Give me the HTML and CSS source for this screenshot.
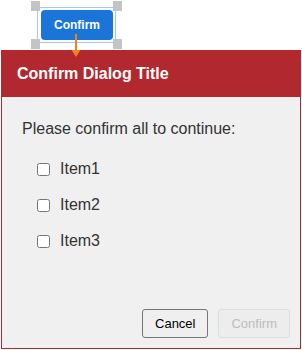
FILE: index.html
```html
<!DOCTYPE html>
<html>
<head>
  <meta charset="UTF-8">
  <title>Confirm Dialog</title>
  <link rel="stylesheet" href="styles.css">
</head>
<body>

  <!-- Trigger button, selected in the editor -->
  <div class="stage">
    <div class="selected">
      <button class="trigger">Confirm</button>
      <span class="handle tl"></span>
      <span class="handle tr"></span>
      <span class="handle bl"></span>
      <span class="handle br"></span>
      <svg class="link" width="10" height="24" viewBox="0 0 10 24">
        <line x1="5" y1="0" x2="5" y2="17" stroke="#f0801e" stroke-width="2"/>
        <polygon points="0.5,16 9.5,16 5,23" fill="#f0801e"/>
      </svg>
    </div>
  </div>

  <!-- Dialog -->
  <div class="dialog">
    <div class="dialog-title">Confirm Dialog Title</div>
    <div class="dialog-body">
      <p class="prompt">Please confirm all to continue:</p>
      <label class="item"><input type="checkbox"> Item1</label>
      <label class="item"><input type="checkbox"> Item2</label>
      <label class="item"><input type="checkbox"> Item3</label>
    </div>
    <div class="dialog-footer">
      <button class="btn">Cancel</button>
      <button class="btn" disabled>Confirm</button>
    </div>
  </div>

</body>
</html>
```

FILE: styles.css
```css
body {
  margin: 0;
  font-family: "Liberation Sans", Arial, sans-serif;
  background: #fff;
}
.stage {
  height: 50px;
  padding: 7px 0 0 37px;
  box-sizing: border-box;
}
.selected {
  position: relative;
  width: 79px;
  height: 36px;
  box-sizing: border-box;
  border: 1px solid #a9c4f7;
  padding: 2px 0 0 3px;
}
.trigger {
  width: 72px;
  height: 30px;
  border: none;
  border-radius: 4px;
  background: #1b74d8;
  color: #fff;
  font-family: inherit;
  font-size: 12px;
  font-weight: bold;
  padding: 0;
}
.handle {
  position: absolute;
  width: 9px;
  height: 10px;
  background: #c4c4c4;
  z-index: -1;
}
.tl { left: -7px; top: -7px; }
.tr { right: -7px; top: -7px; }
.bl { left: -7px; bottom: -7px; }
.br { right: -7px; bottom: -7px; }
.link {
  position: absolute;
  left: 33px;
  top: 26px;
  z-index: 2;
}
.dialog {
  margin-left: 1px;
  width: 300px;
  height: 299px;
  box-sizing: border-box;
  border: 1px solid #b1282e;
  background: #f0f0f0;
  display: flex;
  flex-direction: column;
}
.dialog-title {
  background: #b1282e;
  color: #fff;
  font-size: 16px;
  font-weight: bold;
  height: 46px;
  line-height: 46px;
  padding-left: 15px;
}
.dialog-body {
  padding: 23px 0 0 20px;
  color: #333;
}
.prompt {
  margin: 0 0 23px 0;
  font-size: 16px;
  line-height: 18px;
}
.item {
  display: flex;
  align-items: center;
  gap: 10px;
  margin: 0 0 20px 15px;
  font-size: 16px;
  height: 16px;
}
.item input {
  margin: 0;
  width: 13px;
  height: 13px;
}
.dialog-footer {
  margin-top: auto;
  display: flex;
  justify-content: flex-end;
  gap: 10px;
  padding: 0 10px 10px 0;
}
.btn {
  height: 29px;
  font-family: inherit;
  font-size: 13px;
  padding: 0 12px;
  background: #efefef;
  border: 1px solid #767676;
  border-radius: 3px;
  color: #000;
}
.btn:disabled {
  border-color: #dedede;
  color: #bcbcbc;
  background: #ededed;
}
```
